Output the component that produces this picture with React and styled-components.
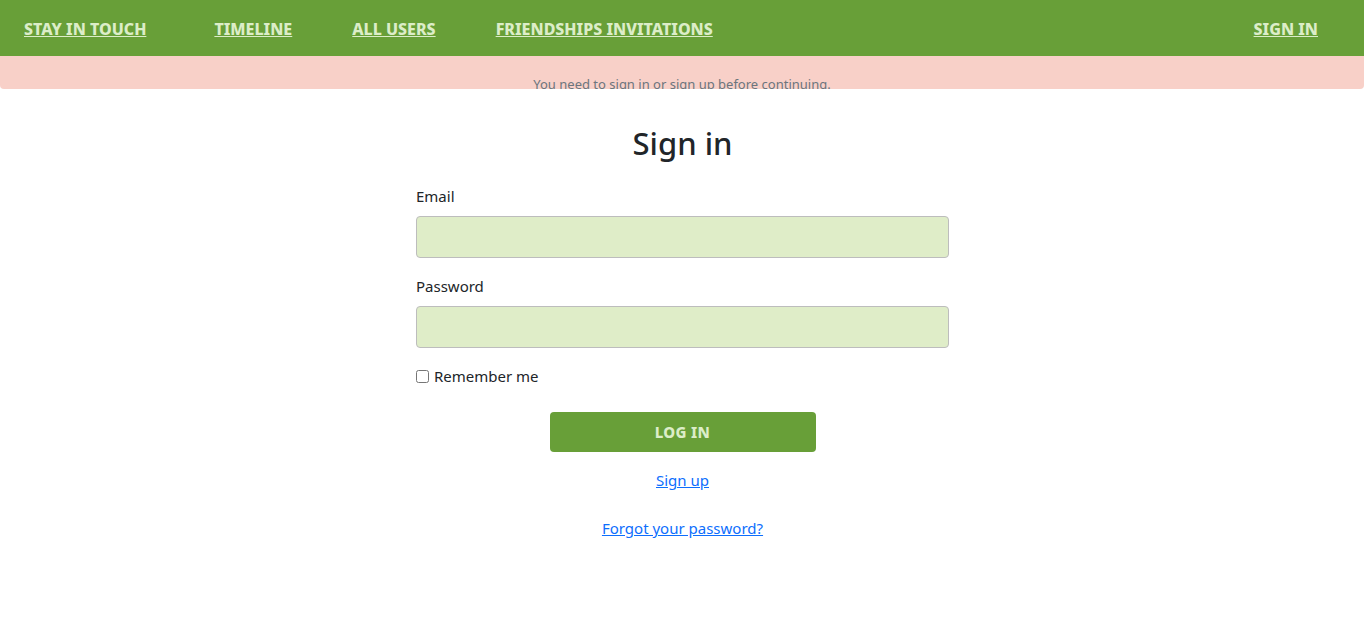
import React from 'react';
import styled, { createGlobalStyle } from 'styled-components';

const GlobalStyle = createGlobalStyle`
  body {
    margin: 0;
    font-family: "Noto Sans", "Open Sans", sans-serif;
    color: #212529;
    background: #fff;
  }
  * { box-sizing: border-box; }
`;

const NavBar = styled.nav`
  height: 56px;
  background: #689f38;
  display: flex;
  align-items: center;
  padding: 2px 46px 0 24px;
`;

const NavLinks = styled.div`
  display: flex;
  gap: 60px;
  flex: 1;
`;

const NavLink = styled.a`
  font-family: "Noto Sans", sans-serif;
  font-weight: 800;
  font-size: 16px;
  color: #dcedc8;
  text-decoration: underline;
  text-transform: uppercase;
  cursor: pointer;
  margin-right: ${p => (p.brand ? 8 : 0)}px;
`;

const Alert = styled.div`
  height: 33px;
  background: #f8d0c8;
  border-radius: 0 0 4px 4px;
  overflow: hidden;
  text-align: center;
  font-size: 13px;
  color: #6c757d;
  padding-top: 18px;
  line-height: 20px;
`;

const Main = styled.main`
  width: 534px;
  margin: 0 auto;
  padding: 36px 0 0 1px;
`;

const Title = styled.h1`
  font-size: 31px;
  font-weight: 500;
  text-align: center;
  margin: 0 0 22px;
  line-height: 1.2;
`;

const Field = styled.div`
  margin-bottom: 16px;
`;

const Label = styled.label`
  display: block;
  font-size: 15px;
  line-height: 24px;
  margin-bottom: 8px;
`;

const Input = styled.input`
  display: block;
  width: 100%;
  height: 42px;
  background: #dfedc8;
  border: 1px solid #bdbdbd;
  border-radius: 4px;
  outline: none;
`;

const CheckRow = styled.label`
  display: flex;
  align-items: center;
  gap: 5px;
  font-size: 15px;
  line-height: 24px;
  margin-top: 16px;
`;

const Check = styled.input`
  margin: 0;
  width: 13px;
  height: 13px;
`;

const Actions = styled.div`
  display: flex;
  flex-direction: column;
  align-items: center;
  margin-top: 24px;
`;

const Button = styled.button`
  width: 266px;
  height: 40px;
  background: #689f38;
  border: none;
  border-radius: 4px;
  color: #dcedc8;
  font-family: "Noto Sans", sans-serif;
  font-weight: 800;
  font-size: 15px;
  letter-spacing: 0.3px;
  text-transform: uppercase;
  cursor: pointer;
`;

const LinkText = styled.a`
  color: #0d6efd;
  font-size: 15px;
  text-decoration: underline;
  margin-top: ${p => p.gap}px;
  line-height: 24px;
  cursor: pointer;
`;

export default function App() {
  return (
    <>
      <GlobalStyle />
      <NavBar>
        <NavLinks>
          <NavLink brand>Stay in touch</NavLink>
          <NavLink>Timeline</NavLink>
          <NavLink>All users</NavLink>
          <NavLink>Friendships invitations</NavLink>
        </NavLinks>
        <NavLink>Sign in</NavLink>
      </NavBar>
      <Alert>You need to sign in or sign up before continuing.</Alert>
      <Main>
        <Title>Sign in</Title>
        <form onSubmit={e => e.preventDefault()}>
          <Field>
            <Label>Email</Label>
            <Input type="email" />
          </Field>
          <Field>
            <Label>Password</Label>
            <Input type="password" />
          </Field>
          <CheckRow>
            <Check type="checkbox" />
            Remember me
          </CheckRow>
          <Actions>
            <Button type="submit">Log in</Button>
            <LinkText gap={16}>Sign up</LinkText>
            <LinkText gap={24}>Forgot your password?</LinkText>
          </Actions>
        </form>
      </Main>
    </>
  );
}
